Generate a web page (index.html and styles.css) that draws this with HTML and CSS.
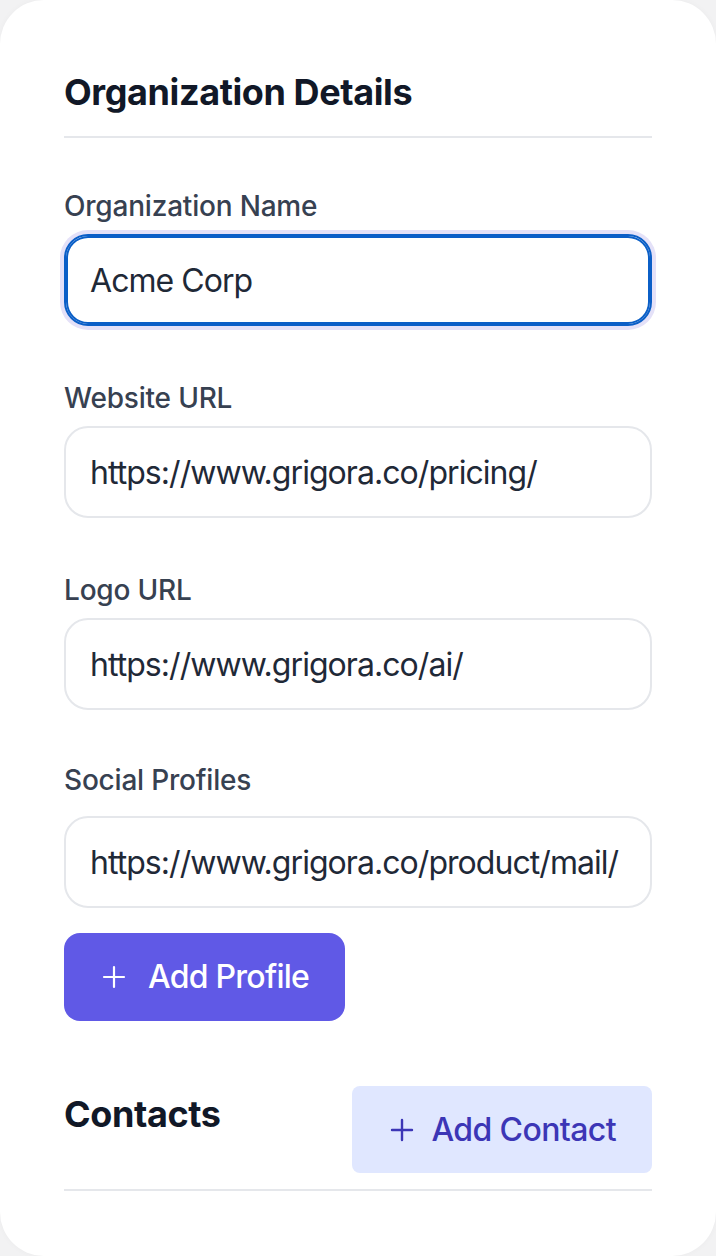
FILE: index.html
```html
<!DOCTYPE html>
<html lang="en">
<head>
<meta charset="utf-8">
<title>Organization Details</title>
<link rel="stylesheet" href="styles.css">
</head>
<body>
<main class="card">
  <h2 class="section-title">Organization Details</h2>
  <form class="form">
    <div class="field">
      <label class="label" for="org-name">Organization Name</label>
      <input class="input is-focused" id="org-name" type="text" value="Acme Corp">
    </div>
    <div class="field">
      <label class="label" for="website">Website URL</label>
      <input class="input" id="website" type="text" value="https://www.grigora.co/pricing/">
    </div>
    <div class="field">
      <label class="label" for="logo">Logo URL</label>
      <input class="input" id="logo" type="text" value="https://www.grigora.co/ai/">
    </div>
    <div class="field field-social">
      <label class="label label-social" for="social">Social Profiles</label>
      <input class="input" id="social" type="text" value="https://www.grigora.co/product/mail/">
      <button class="btn btn-primary" type="button">
        <svg class="plus" viewBox="0 0 28 28" width="28" height="28" aria-hidden="true"><path d="M14 4v20M4 14h20" fill="none" stroke="currentColor" stroke-width="2.2" stroke-linecap="round"/></svg>
        <span>Add Profile</span>
      </button>
    </div>
  </form>
  <div class="contacts-head">
    <h2 class="contacts-title">Contacts</h2>
    <button class="btn btn-soft" type="button">
      <svg class="plus" viewBox="0 0 28 28" width="28" height="28" aria-hidden="true"><path d="M14 4v20M4 14h20" fill="none" stroke="currentColor" stroke-width="2.4" stroke-linecap="round"/></svg>
      <span>Add Contact</span>
    </button>
  </div>
</main>
</body>
</html>
```

FILE: styles.css
```css
* { box-sizing: border-box; }

html, body {
  margin: 0;
  padding: 0;
  background: #f2f2f3;
}

body {
  font-family: Inter, "Noto Sans", "Liberation Sans", sans-serif;
  color: #111827;
}

.card {
  min-height: 1256px;
  background: #ffffff;
  border-radius: 44px;
  padding: 64px 64px 48px;
  box-shadow: 0 0 6px rgba(0, 0, 0, 0.03);
}

.section-title {
  margin: 0;
  font-size: 36px;
  line-height: 56px;
  font-weight: 700;
  color: #111827;
  padding-bottom: 16px;
  border-bottom: 2px solid #e5e7eb;
  letter-spacing: -0.4px;
}

.form {
  display: flex;
  flex-direction: column;
  margin-top: 48px;
}

.field {
  display: flex;
  flex-direction: column;
}

.field + .field {
  margin-top: 52px;
}

.field-social {
  margin-top: 50px !important;
}

.label {
  font-size: 28px;
  line-height: 40px;
  font-weight: 500;
  color: #374151;
  margin-bottom: 8px;
  letter-spacing: -0.2px;
}

.label-social {
  margin-bottom: 16px;
}

.input {
  display: block;
  width: 100%;
  height: 92px;
  padding: 20px 24px;
  font-family: inherit;
  font-size: 32px;
  line-height: 48px;
  letter-spacing: -0.95px;
  color: #1f2937;
  background: #ffffff;
  border: 2px solid #e5e7eb;
  border-radius: 24px;
  outline: none;
}

.input.is-focused {
  border-color: #0b5fc7;
  box-shadow: inset 0 0 0 2px #0b5fc7, 0 0 0 4px #e4e1f8;
}

.btn {
  display: inline-flex;
  align-items: center;
  font-family: inherit;
  font-size: 32px;
  line-height: 48px;
  font-weight: 500;
  border: none;
  cursor: pointer;
}

.btn .plus {
  display: block;
  flex: none;
}

.btn-primary {
  align-self: flex-start;
  margin-top: 25px;
  height: 88px;
  padding: 0 36px 0 36px;
  gap: 20px;
  background: #6059e6;
  color: #ffffff;
  border-radius: 16px;
  letter-spacing: -0.75px;
}

.contacts-head {
  display: flex;
  justify-content: space-between;
  align-items: flex-start;
  margin-top: 65px;
  padding-bottom: 16px;
  border-bottom: 2px solid #e5e7eb;
}

.contacts-title {
  margin: 0;
  font-size: 36px;
  line-height: 56px;
  font-weight: 700;
  color: #111827;
  letter-spacing: -0.4px;
}

.btn-soft {
  height: 87px;
  padding: 0 36px;
  gap: 15px;
  background: #e0e7ff;
  color: #3c36b6;
  border-radius: 8px;
  letter-spacing: -0.6px;
}
```
